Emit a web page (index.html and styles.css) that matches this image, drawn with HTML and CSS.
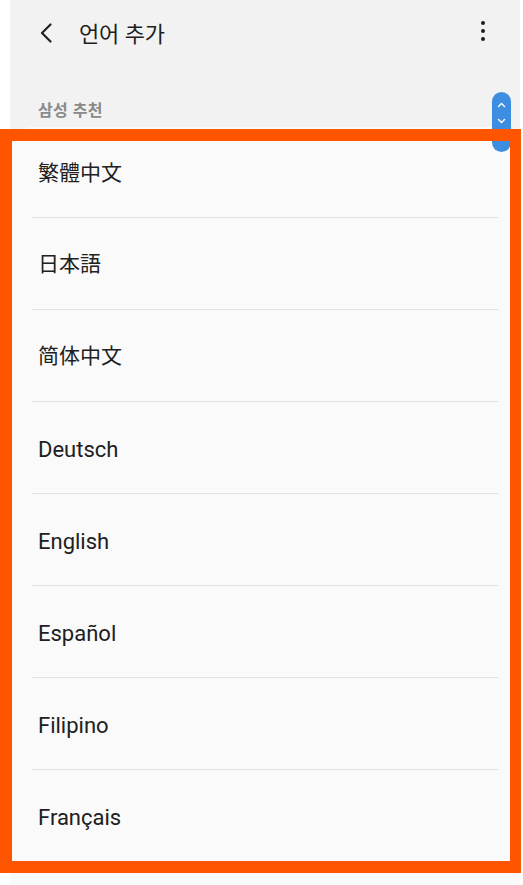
FILE: index.html
```html
<!DOCTYPE html>
<html lang="ko">
<head>
<meta charset="utf-8">
<title>언어 추가</title>
<link rel="stylesheet" href="styles.css">
</head>
<body>
<div class="app">
  <header class="topbar">
    <button class="back" aria-label="뒤로">
      <svg width="14" height="20" viewBox="0 0 14 20"><path d="M11.5 1.5 L3 10 L11.5 18.5" fill="none" stroke="#222" stroke-width="2.2" stroke-linecap="round" stroke-linejoin="round"/></svg>
    </button>
    <h1 class="title">언어 추가</h1>
    <button class="more" aria-label="더보기">
      <span class="dot"></span><span class="dot"></span><span class="dot"></span>
    </button>
  </header>
  <div class="section-label">삼성 추천</div>
  <ul class="list">
    <li class="row"><span class="cjk tc">繁體中文</span></li>
    <li class="row"><span class="cjk jp">日本語</span></li>
    <li class="row"><span class="cjk sc">简体中文</span></li>
    <li class="row">Deutsch</li>
    <li class="row">English</li>
    <li class="row">Español</li>
    <li class="row">Filipino</li>
    <li class="row">Français</li>
  </ul>
  <div class="scroller">
    <svg width="19" height="40" viewBox="0 0 19 40"><path d="M6.5 14.5 L9.5 11.5 L12.5 14.5" fill="none" stroke="#fff" stroke-width="1.4" stroke-linecap="round" stroke-linejoin="round"/><path d="M6.5 27.5 L9.5 30.5 L12.5 27.5" fill="none" stroke="#fff" stroke-width="1.4" stroke-linecap="round" stroke-linejoin="round"/></svg>
  </div>
</div>
<div class="highlight"></div>
</body>
</html>
```
FILE: styles.css
```css
* { box-sizing: border-box; }
html, body { margin: 0; padding: 0; }
body {
  background: #ffffff;
  font-family: "Roboto", "Noto Sans CJK KR", sans-serif;
  color: #202020;
  width: 523px;
  height: 885px;
  overflow: hidden;
  position: relative;
}
.app {
  margin-left: 10px;
  width: 510px;
  height: 885px;
  background: #f2f2f2;
  position: relative;
  overflow: hidden;
  display: flex;
  flex-direction: column;
}
.topbar {
  flex-shrink: 0;
  height: 66px;
  display: flex;
  align-items: center;
  padding-left: 29px;
  padding-right: 32px;
}
.back {
  border: 0;
  background: none;
  padding: 0;
  width: 16px;
  height: 22px;
  display: flex;
  align-items: center;
  margin-top: -1px;
}
.title {
  margin: -2px 0 0 24px;
  font-family: "Noto Sans CJK KR", sans-serif;
  font-weight: 400;
  font-size: 22px;
  line-height: 30px;
  color: #1e1e1e;
  flex: 1;
  letter-spacing: -0.3px;
}
.more {
  border: 0;
  background: none;
  padding: 0;
  width: 10px;
  display: flex;
  flex-direction: column;
  align-items: center;
  gap: 4px;
  margin-top: -4px;
}
.dot {
  width: 4px;
  height: 4px;
  border-radius: 50%;
  background: #1e1e1e;
}
.section-label {
  flex-shrink: 0;
  font-family: "Noto Sans CJK KR", sans-serif;
  font-weight: 700;
  font-size: 16px;
  color: #8a8a8a;
  padding-left: 28px;
  height: 61px;
  line-height: 20px;
  padding-top: 33px;
  letter-spacing: 0.3px;
}
.list {
  list-style: none;
  margin: 0;
  padding: 0;
  background: #fafafa;
  border-radius: 22px 22px 0 0;
  flex: 1;
}
.row {
  height: 92px;
  display: flex;
  align-items: center;
  font-size: 22px;
  margin: 0 22px;
  padding-left: 6px;
  padding-top: 3px;
  border-bottom: 1px solid #e2e2e2;
}
.row:first-child { height: 91px; }
.cjk { font-size: 21px; margin-top: -6px; }
.tc { font-family: "Noto Sans CJK TC", sans-serif; }
.jp { font-family: "Noto Sans CJK JP", sans-serif; }
.sc { font-family: "Noto Sans CJK SC", sans-serif; }
.scroller {
  position: absolute;
  left: 482px;
  top: 92px;
  width: 19px;
  height: 60px;
  border-radius: 10px;
  background: #3d8ee0;
}
.highlight {
  position: absolute;
  left: 0;
  top: 129px;
  width: 521px;
  height: 744px;
  border-style: solid;
  border-color: #ff5500;
  border-width: 12px 11px 12px 12px;
  pointer-events: none;
}
```
